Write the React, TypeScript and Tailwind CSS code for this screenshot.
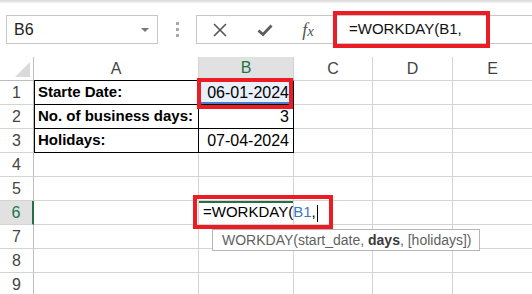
const font = "font-['Liberation_Sans',Arial,sans-serif]"

const cols = ['A', 'B', 'C', 'D', 'E']

const XIcon = () => (
  <svg width="16" height="16" viewBox="0 0 16 16">
    <path d="M2 2L14 14M14 2L2 14" stroke="#555" strokeWidth={1.6} fill="none" />
  </svg>
)

const CheckIcon = () => (
  <svg width="16" height="14" viewBox="0 0 16 14">
    <path d="M1.5 7.5L6 11.5L14.5 2.5" stroke="#5e5e5e" strokeWidth={2.8} fill="none" />
  </svg>
)

const Cell = ({ className = '', children }: { className?: string; children?: React.ReactNode }) => (
  <div className={`h-[24px] border-r border-b border-[#d4d4d4] flex items-center text-[15px] text-black ${className}`}>
    {children}
  </div>
)

export default function App() {
  const rows = [1, 2, 3, 4, 5, 6, 7, 8, 9]

  return (
    <div className={`relative w-[532px] h-[294px] overflow-hidden bg-white ${font}`}>
      {/* top strip */}
      <div className="h-[3px] bg-gradient-to-b from-[#d6d6d6] to-[#f4f4f4]" />

      {/* formula bar */}
      <div className="h-[54px] flex items-start pt-[12px]">
        <div className="ml-[6px] w-[152px] h-[29px] border border-[#c6c6c6] flex items-center justify-between pl-[7px] pr-[8px]">
          <span className="text-[16px] text-[#222]">B6</span>
          <span className="w-0 h-0 border-l-[4px] border-r-[4px] border-t-[4px] border-l-transparent border-r-transparent border-t-[#777]" />
        </div>
        <div className="w-[38px] h-[29px] flex flex-col items-center justify-center gap-[3px]">
          <span className="w-[3px] h-[3px] bg-[#a8a8a8]" />
          <span className="w-[3px] h-[3px] bg-[#a8a8a8]" />
          <span className="w-[3px] h-[3px] bg-[#a8a8a8]" />
        </div>
        <div className="flex-1 h-[29px] border border-r-0 border-[#c6c6c6] flex items-center">
          <div className="w-[44px] flex justify-center pl-[2px]">
            <XIcon />
          </div>
          <div className="w-[46px] flex justify-center pl-[1px]">
            <CheckIcon />
          </div>
          <div className="w-[42px] flex justify-center">
            <span className="font-['Liberation_Serif',serif] italic text-[18px] text-[#555] leading-none">
              f<span className="text-[15px]">x</span>
            </span>
          </div>
          <span className="ml-[20px] text-[15px] text-[#111]">=WORKDAY(B1,</span>
        </div>
      </div>

      {/* grid */}
      <div className="grid grid-cols-[34px_165px_95px_79px_80px_80px]">
        {/* corner */}
        <div className="relative h-[24px] border-r border-b border-[#bdbdbd]">
          <svg className="absolute right-[3px] bottom-[3px]" width="15" height="15" viewBox="0 0 15 15">
            <path d="M15 0L15 15L0 15Z" fill="#dadada" />
          </svg>
        </div>
        {cols.map((c) => (
          <div
            key={c}
            className={`h-[24px] border-r border-[#d4d4d4] flex items-center justify-center text-[16px] ${
              c === 'B'
                ? 'bg-[#e1e1e1] text-[#217346] border-b-2 border-b-[#217346]'
                : c === 'A'
                  ? 'text-[#444] border-b border-b-black'
                  : 'text-[#444] border-b border-b-[#d4d4d4]'
            }`}
          >
            {c}
          </div>
        ))}

        {rows.map((r) => (
          <RowCells key={r} r={r} />
        ))}
      </div>

      {/* red annotation boxes */}
      <div className="absolute left-[333px] top-[11px] w-[157px] h-[37px] border-4 border-[#ec1c24]" />
      <div className="absolute left-[197px] top-[78px] w-[96px] h-[31px] border-4 border-[#ec1c24]" />
      <div className="absolute left-[193px] top-[195px] w-[140px] h-[34px] border-4 border-[#ec1c24]" />

      {/* function tooltip */}
      <div className="absolute left-[212px] top-[229px] w-[268px] h-[22px] border border-[#b5b5b5] bg-white flex items-center pl-[9px] text-[14px] text-[#5f5f5f] whitespace-pre">
        WORKDAY(start_date, <b className="text-[#3a3a3a]">days</b>, [holidays])
      </div>
    </div>
  )
}

const RowCells = ({ r }: { r: number }) => {
  const selected = r === 6
  const head = (
    <div
      className={`h-[24px] border-b border-[#d4d4d4] flex items-center justify-center text-[16px] ${
        selected
          ? 'bg-[#e1e1e1] text-[#217346] border-r-2 border-r-[#217346]'
          : 'text-[#444] border-r border-r-[#bdbdbd]'
      }`}
    >
      {r}
    </div>
  )

  const labels: Record<number, [string, string]> = {
    1: ['Starte Date:', '06-01-2024'],
    2: ['No. of business days:', '3'],
    3: ['Holidays:', '07-04-2024'],
  }

  if (labels[r]) {
    const [a, b] = labels[r]
    return (
      <>
        {head}
        <Cell className="!border-r-black !border-b-black shadow-[inset_1px_0_0_#000] pl-[4px] font-bold">{a}</Cell>
        <Cell
          className={`!border-r-black !border-b-black justify-end pr-[4px] !text-[16px] ${
            r === 1 ? 'bg-[#eaf0fa] shadow-[inset_0_-2px_0_#4a7ed4]' : ''
          }`}
        >
          {b}
        </Cell>
        <Cell />
        <Cell />
        <Cell />
      </>
    )
  }

  if (selected) {
    return (
      <>
        {head}
        <Cell />
        <Cell className="relative overflow-visible shadow-[inset_0_2px_0_#217346]">
          <span className="absolute left-[4px] z-10 whitespace-nowrap text-[15px]">
            =WORKDAY(<span className="text-[#3c78c8]">B1</span>,
            <span className="inline-block w-[1px] h-[17px] bg-black align-middle ml-[1px]" />
          </span>
        </Cell>
        <Cell />
        <Cell />
        <Cell />
      </>
    )
  }

  return (
    <>
      {head}
      <Cell />
      <Cell />
      <Cell />
      <Cell />
      <Cell />
    </>
  )
}
